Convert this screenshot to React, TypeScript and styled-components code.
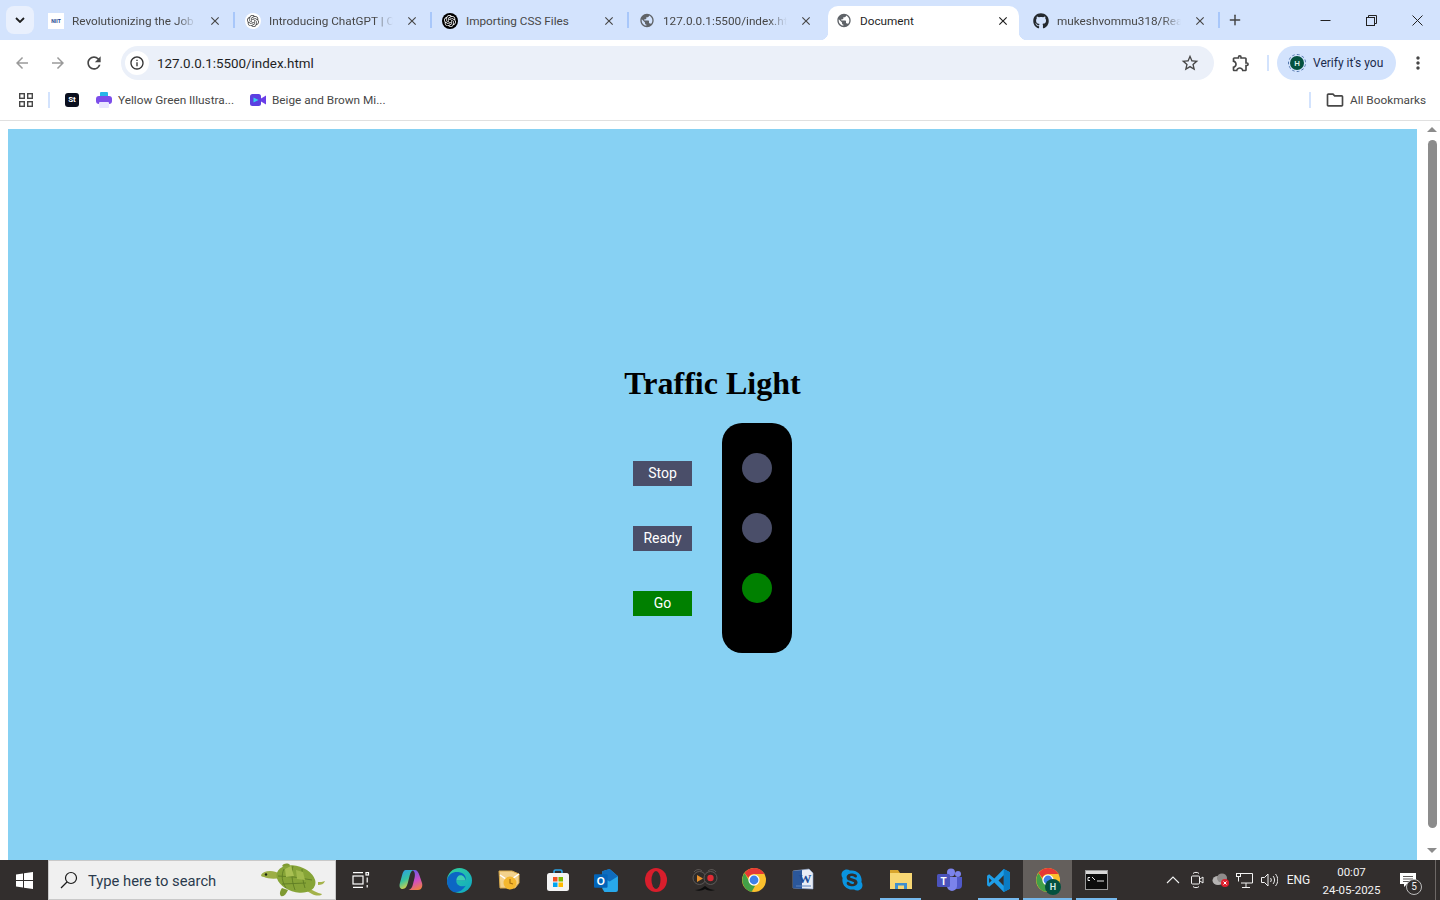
import styled, { createGlobalStyle } from "styled-components";
import { ReactNode } from "react";
import {
  MdArrowBack,
  MdArrowForward,
  MdClose,
  MdInfoOutline,
  MdMoreVert,
  MdOutlineExtension,
  MdOutlineFolder,
  MdPublic,
  MdRefresh,
  MdStarBorder,
} from "react-icons/md";
import { FaGithub, FaSkype } from "react-icons/fa";
import { SiOpenai } from "react-icons/si";
import { FiPlus } from "react-icons/fi";

const GlobalStyle = createGlobalStyle`
  html, body {
    margin: 0;
    padding: 0;
    height: 100%;
    overflow: hidden;
    background: #fff;
  }
  * { box-sizing: border-box; }
`;

const uiFont = `Roboto, "Noto Sans", sans-serif`;

const Screen = styled.div`
  width: 1440px;
  height: 900px;
  display: flex;
  flex-direction: column;
  font-family: ${uiFont};
`;

/* ---- tab strip ---- */
const TabStrip = styled.div`
  height: 40px;
  flex: none;
  background: #d3e3fd;
  display: flex;
  align-items: flex-end;
  position: relative;
`;

const TabSearch = styled.div`
  width: 28px;
  height: 28px;
  margin: 0 6px 6px 6px;
  border-radius: 8px;
  background: #e9f0fd;
  display: flex;
  align-items: center;
  justify-content: center;
  flex: none;
`;

const TabRow = styled.div`
  display: flex;
  gap: 6px;
  height: 34px;
`;

const Tab = styled.div<{ $active?: boolean; $sep?: boolean }>`
  width: 191px;
  height: 34px;
  position: relative;
  display: flex;
  align-items: center;
  padding: 0 0 5px 8px;
  border-radius: 10px 10px 0 0;
  background: ${(p) => (p.$active ? "#fff" : "transparent")};
  color: ${(p) => (p.$active ? "#1f1f1f" : "#474747")};
  ${(p) =>
    p.$sep
      ? `&::after {
    content: "";
    position: absolute;
    right: -4px;
    top: 6px;
    width: 2px;
    height: 16px;
    background: #a8c7fa;
  }`
      : ""}
  ${(p) =>
    p.$active
      ? `&::before {
    content: "";
    position: absolute;
    left: -8px;
    bottom: 0;
    width: 8px;
    height: 8px;
    background: radial-gradient(circle at 0 0, #d3e3fd 8px, #fff 8.5px);
  }`
      : ""}
`;

const ActiveTabTail = styled.span`
  position: absolute;
  right: -8px;
  bottom: 0;
  width: 8px;
  height: 8px;
  background: radial-gradient(circle at 100% 0, #d3e3fd 8px, #fff 8.5px);
`;

const Favicon = styled.span`
  width: 16px;
  height: 16px;
  flex: none;
  display: flex;
  align-items: center;
  justify-content: center;
`;

const TabTitle = styled.span<{ $fade?: boolean }>`
  margin-left: 8px;
  width: 124px;
  flex: none;
  font-size: 11.75px;
  line-height: 16px;
  white-space: nowrap;
  overflow: hidden;
  ${(p) =>
    p.$fade
      ? `mask-image: linear-gradient(to right, #000 85%, transparent 100%);`
      : ""}
`;

const TabClose = styled.span`
  margin-left: 11px;
  width: 16px;
  height: 16px;
  flex: none;
  display: flex;
  align-items: center;
  justify-content: center;
`;

const NewTab = styled.div`
  width: 20px;
  height: 20px;
  margin: 0 0 10px 9px;
  color: #444;
  display: flex;
  align-items: center;
  justify-content: center;
`;

const WindowControls = styled.div`
  margin-left: auto;
  display: flex;
  height: 40px;
  align-items: center;
`;

const WindowButton = styled.div`
  width: 46px;
  height: 40px;
  display: flex;
  align-items: center;
  justify-content: center;
`;

/* ---- toolbar ---- */
const Toolbar = styled.div`
  height: 40px;
  flex: none;
  background: #fff;
  display: flex;
  align-items: flex-end;
  padding-left: 4px;
  border-radius: 8px 8px 0 0;
  margin-top: 0;
`;

const NavButton = styled.div<{ $muted?: boolean; $w?: number }>`
  width: ${(p) => p.$w ?? 36}px;
  height: 34px;
  flex: none;
  display: flex;
  align-items: center;
  justify-content: center;
  color: ${(p) => (p.$muted ? "#9a9a9a" : "#474747")};
`;

const Omnibox = styled.div`
  width: 1093px;
  height: 34px;
  margin-left: 9px;
  flex: none;
  background: #ebf0f9;
  border-radius: 17px;
  display: flex;
  align-items: center;
  padding: 0 14px 0 4px;
`;

const InfoBadge = styled.div`
  width: 24px;
  height: 24px;
  border-radius: 50%;
  background: #fff;
  color: #333;
  display: flex;
  align-items: center;
  justify-content: center;
  flex: none;
`;

const UrlText = styled.span`
  margin-left: 8px;
  font-size: 13.4px;
  color: #1f1f1f;
`;

const OmniStar = styled.div`
  margin-left: auto;
  color: #474747;
  display: flex;
`;

const ToolDivider = styled.div`
  width: 2px;
  height: 16px;
  margin: 0 8px 9px 0;
  background: #d3e3fd;
  flex: none;
`;

const ProfilePill = styled.div`
  width: 119px;
  height: 34px;
  flex: none;
  border-radius: 17px;
  background: #d3e3fd;
  display: flex;
  align-items: center;
  padding-left: 11px;
`;

const Avatar = styled.div<{ $size: number }>`
  width: ${(p) => p.$size}px;
  height: ${(p) => p.$size}px;
  border-radius: 50%;
  background: #04513f;
  color: #d7efe6;
  font-size: ${(p) => Math.round(p.$size * 0.55)}px;
  font-weight: 600;
  display: flex;
  align-items: center;
  justify-content: center;
  flex: none;
`;

const AvatarRing = styled.div`
  width: 18px;
  height: 18px;
  border: 1px dashed #4a6fa8;
  border-radius: 50%;
  display: flex;
  align-items: center;
  justify-content: center;
  flex: none;
`;

const ProfileText = styled.span`
  margin-left: 7px;
  font-size: 12px;
  color: #1b2b4d;
  white-space: nowrap;
`;

/* ---- bookmarks ---- */
const BookmarksBar = styled.div`
  height: 41px;
  flex: none;
  background: #fff;
  border-bottom: 1px solid #e0e0e0;
  padding-bottom: 1px;
  display: flex;
  align-items: center;
`;

const BarSlot = styled.div<{ $w: number; $pl?: number; $pr?: number }>`
  width: ${(p) => p.$w}px;
  height: 24px;
  flex: none;
  padding: 0 ${(p) => p.$pr ?? 0}px 0 ${(p) => p.$pl ?? 0}px;
  display: flex;
  align-items: center;
  justify-content: center;
`;

const BarDivider = styled.div`
  width: 2px;
  height: 16px;
  background: #d3e3fd;
  flex: none;
`;

const Bookmark = styled.div<{ $w: number }>`
  width: ${(p) => p.$w}px;
  flex: none;
  display: flex;
  align-items: center;
  gap: 6px;
  font-size: 11.8px;
  color: #474747;
  white-space: nowrap;
`;

const StBadge = styled.span`
  width: 14px;
  height: 14px;
  border-radius: 3px;
  background: #0a0f1e;
  color: #fff;
  font-size: 8px;
  font-weight: 700;
  display: flex;
  align-items: center;
  justify-content: center;
`;

/* ---- page ---- */
const Viewport = styled.div`
  flex: 1;
  display: flex;
  min-height: 0;
`;

const PageArea = styled.div`
  flex: 1;
  padding: 8px 0 0 8px;
  background: #fff;
  min-width: 0;
`;

const Page = styled.main`
  height: 100%;
  background: #87d1f3;
  display: flex;
  flex-direction: column;
  align-items: center;
  padding-top: 236px;
`;

const Title = styled.h1`
  margin: 0 0 21px;
  font-family: "Liberation Serif", "Times New Roman", serif;
  font-size: 32px;
  font-weight: 700;
  line-height: 37px;
  color: #000;
`;

const LightRow = styled.div`
  display: flex;
  align-items: center;
  gap: 30px;
`;

const Controls = styled.div`
  display: flex;
  flex-direction: column;
  gap: 40px;
`;

const ControlButton = styled.button<{ $on?: boolean }>`
  width: 59px;
  height: 25px;
  padding: 0;
  border: none;
  background: ${(p) => (p.$on ? "#008000" : "#4a4e69")};
  color: #fff;
  font-family: Roboto, "Liberation Sans", sans-serif;
  font-size: 14px;
  font-weight: 400;
`;

const Housing = styled.div`
  width: 70px;
  height: 230px;
  background: #000;
  border-radius: 20px;
  display: flex;
  flex-direction: column;
  align-items: center;
  gap: 30px;
  padding-top: 30px;
`;

const Lamp = styled.div<{ $on?: boolean }>`
  width: 30px;
  height: 30px;
  border-radius: 50%;
  background: ${(p) => (p.$on ? "#008000" : "#4a4e69")};
`;

/* ---- scrollbar ---- */
const ScrollBar = styled.div`
  width: 23px;
  flex: none;
  background: #fff;
  display: flex;
  flex-direction: column;
  align-items: center;
  padding: 6px 0 7px 7px;
`;

const ScrollThumb = styled.div`
  width: 9px;
  flex: 1;
  margin: 8px 0 20px;
  border-radius: 5px;
  background: #8c8c8c;
`;

const ScrollArrow = styled.div<{ $down?: boolean }>`
  width: 0;
  height: 0;
  border-left: 5px solid transparent;
  border-right: 5px solid transparent;
  ${(p) =>
    p.$down
      ? "border-top: 5px solid #8c8c8c;"
      : "border-bottom: 5px solid #8c8c8c;"}
`;

/* ---- taskbar ---- */
const Taskbar = styled.div`
  height: 40px;
  flex: none;
  background: #322e2d;
  display: flex;
  align-items: stretch;
  color: #f2f2f2;
`;

const StartButton = styled.div`
  width: 48px;
  flex: none;
  display: flex;
  align-items: center;
  justify-content: center;
`;

const SearchBox = styled.div`
  width: 288px;
  flex: none;
  background: #f0f0f0;
  border: 1px solid #c9c9c9;
  display: flex;
  align-items: center;
  padding-left: 11px;
  color: #2a3a4d;
  font-size: 14.75px;
`;

const SearchLabel = styled.span`
  margin-left: 10px;
  padding-top: 1px;
  white-space: nowrap;
`;

const Turtle = styled.svg`
  margin-left: auto;
  margin-right: 9px;
  flex: none;
`;

const AppSlot = styled.div<{ $w?: number; $open?: boolean; $active?: boolean }>`
  width: ${(p) => p.$w ?? 49}px;
  flex: none;
  position: relative;
  display: flex;
  align-items: center;
  justify-content: center;
  background: ${(p) => (p.$active ? "#645f5c" : "transparent")};
  ${(p) =>
    p.$open
      ? `&::after {
    content: "";
    position: absolute;
    bottom: 0;
    left: ${p.$active ? 0 : 4}px;
    right: ${p.$active ? 0 : 4}px;
    height: 2px;
    background: #76b9ed;
  }`
      : ""}
`;

const Tray = styled.div`
  margin-left: auto;
  display: flex;
  align-items: stretch;
`;

const TraySlot = styled.div<{ $w: number }>`
  width: ${(p) => p.$w}px;
  flex: none;
  display: flex;
  align-items: center;
  justify-content: center;
  font-size: 12px;
  position: relative;
`;

const Clock = styled.div`
  width: 73px;
  flex: none;
  display: flex;
  flex-direction: column;
  align-items: center;
  justify-content: center;
  font-size: 11.5px;
  line-height: 18px;
  padding-top: 1px;
`;

const NoticeCount = styled.span`
  position: absolute;
  right: 6px;
  bottom: 5px;
  width: 16px;
  height: 16px;
  border: 1px solid #bdbdbd;
  border-radius: 50%;
  background: #322e2d;
  font-size: 10px;
  line-height: 14px;
  text-align: center;
`;

const ShowDesktop = styled.div`
  width: 12px;
  flex: none;
  display: flex;
  justify-content: center;
  &::before {
    content: "";
    width: 1px;
    background: #6d6866;
    margin-left: 2px;
  }
`;

const AvatarBadge = styled.div`
  position: absolute;
  right: 11px;
  bottom: 5px;
`;

/* ---- drawn icons ---- */
const ChromeLogo = ({ size }: { size: number }) => (
  <svg width={size} height={size} viewBox="0 0 24 24">
    <circle cx="12" cy="12" r="12" fill="#fbc02d" />
    <path d="M12 0a12 12 0 0 1 10.4 6H12a6 6 0 0 0-5.6 3.9L2.6 5A12 12 0 0 1 12 0z" fill="#e53935" />
    <path d="M2.6 5l4.8 8.6A6 6 0 0 0 13 18l-3.3 5.8A12 12 0 0 1 2.6 5z" fill="#43a047" />
    <circle cx="12" cy="12" r="5.6" fill="#fff" />
    <circle cx="12" cy="12" r="4.4" fill="#3f80e8" />
  </svg>
);

const WinLogo = () => (
  <svg width="17" height="17" viewBox="0 0 17 17" fill="#fff">
    <path d="M0 2.4 7 1.4V8H0zM8 1.3 17 0v8H8zM0 9h7v6.6l-7-1zM8 9h9v8l-9-1.3z" />
  </svg>
);

const TaskViewIcon = () => (
  <svg width="18" height="16" viewBox="0 0 18 16" fill="none" stroke="#fff" strokeWidth="1.2">
    <path d="M1 .6h10M1 15.4h10" />
    <rect x="1" y="4" width="10" height="8" />
    <rect x="14" y=".5" width="2.5" height="2.5" />
    <path d="M15.2 5.5v5M15.2 13v2.5" />
  </svg>
);

const CopilotIcon = () => (
  <svg width="24" height="24" viewBox="0 0 24 24">
    <defs>
      <linearGradient id="cpA" x1="0.2" y1="0" x2="0.6" y2="1">
        <stop offset="0" stopColor="#2b9fe6" />
        <stop offset="0.5" stopColor="#37c3a0" />
        <stop offset="1" stopColor="#f3d13a" />
      </linearGradient>
      <linearGradient id="cpB" x1="0.4" y1="0" x2="0.7" y2="1">
        <stop offset="0" stopColor="#6a5be8" />
        <stop offset="0.55" stopColor="#d24fc0" />
        <stop offset="1" stopColor="#f0823c" />
      </linearGradient>
    </defs>
    <path d="M7 2h7.500c-2 .6-3 2.500-3.700 5l-2 8c-.8 3-2.300 6-5.300 6C1 21 0 18.500 .8 15.500L3 7.500C3.800 4 5 2 7 2z" fill="url(#cpA)" />
    <path d="M13 2h2.500C18 2 19.500 4 20.500 7.500L23 15c1 3.500-.5 7-4 7H9.500c2.500-.5 3.800-3 4.500-6l1.500-6c.8-3.500.5-7-2.500-8z" fill="url(#cpB)" />
  </svg>
);

const EdgeIcon = () => (
  <svg width="25" height="25" viewBox="0 0 24 24">
    <defs>
      <linearGradient id="edA" x1="0" y1="0" x2="1" y2="1">
        <stop offset="0" stopColor="#34d399" />
        <stop offset="1" stopColor="#0ea5c6" />
      </linearGradient>
    </defs>
    <circle cx="12" cy="12" r="12" fill="url(#edA)" />
    <path d="M0 12C1 5 7 3 12 4c5 1 7 5 5.500 8H9c-.5 4 4 7 9 5 -3 5-8 7-12 6C2 21 0 17 0 12z" fill="#0c66c4" />
    <path d="M9 12c0-3 2-5 4-5 3 0 4.500 2.500 4.500 5H9z" fill="#3fd0b0" />
  </svg>
);

const OutlookOldIcon = () => (
  <svg width="24" height="24" viewBox="0 0 24 24">
    <path d="M2 3h13l7 3v9l-4 5H3z" fill="#f3d28c" stroke="#d8a94a" />
    <path d="M3 7l9 6 10-7" fill="none" stroke="#fff" strokeWidth="1.5" />
    <circle cx="13" cy="15" r="6.500" fill="#f5b82e" />
    <path d="M13 11v4l3 1" fill="none" stroke="#a86f10" strokeWidth="1.200" />
  </svg>
);

const StoreIcon = () => (
  <svg width="24" height="24" viewBox="0 0 24 24">
    <path d="M8 6V3.500A1.500 1.500 0 0 1 9.500 2h5A1.500 1.500 0 0 1 16 3.500V6" fill="none" stroke="#2aa4e6" strokeWidth="1.600" />
    <rect x="1" y="5" width="22" height="18" rx="2.500" fill="#f4f4f4" />
    <rect x="7" y="9" width="4.500" height="4.500" fill="#f25022" />
    <rect x="12.500" y="9" width="4.500" height="4.500" fill="#7fba00" />
    <rect x="7" y="14.500" width="4.500" height="4.500" fill="#00a4ef" />
    <rect x="12.500" y="14.500" width="4.500" height="4.500" fill="#ffb900" />
  </svg>
);

const OutlookIcon = () => (
  <svg width="25" height="25" viewBox="0 0 24 24">
    <path d="M8 3l7-2 8 7v13a2 2 0 0 1-2 2H10l-2-3z" fill="#28a8ea" />
    <path d="M8 3l7-2 8 7-8 5-7-4z" fill="#0f6cbd" />
    <rect x="0" y="6" width="13" height="13" rx="1" fill="#0364b8" />
    <text x="6.500" y="16.500" textAnchor="middle" fontSize="10" fontWeight="700" fill="#fff" fontFamily="Liberation Sans, sans-serif">O</text>
  </svg>
);

const OperaIcon = () => (
  <svg width="24" height="24" viewBox="0 0 24 24">
    <ellipse cx="12" cy="12" rx="11" ry="12" fill="#d81e2c" />
    <ellipse cx="12" cy="12" rx="4.500" ry="9" fill="#322e2d" />
  </svg>
);

const OwlIcon = () => (
  <svg width="26" height="24" viewBox="0 0 26 24">
    <circle cx="7.500" cy="10" r="6.500" fill="#2e2b2a" stroke="#5d5957" strokeWidth="1" />
    <circle cx="18.500" cy="10" r="6.500" fill="#2e2b2a" stroke="#5d5957" strokeWidth="1" />
    <path d="M5 7l6 3.500-6 3.500z" fill="#e8902a" />
    <circle cx="18.500" cy="10" r="3.200" fill="#e02b35" />
    <path d="M3 22c3 0 6-1 10-4 4 3 7 4 10 4-3 1-7 1-10-1-3 2-7 2-10 1z" fill="#0d0d0d" />
    <path d="M2 4C4 1 8 1 10 3M24 4c-2-3-6-3-8-1" fill="none" stroke="#5d5957" />
  </svg>
);

const WordIcon = () => (
  <svg width="24" height="24" viewBox="0 0 24 24">
    <path d="M2 3l16-2 4 4v16l-20-1z" fill="#e9edf6" stroke="#8da6cf" strokeWidth="0.6" />
    <path d="M2 3l9-1v19l-9-1z" fill="#2b579a" />
    <text x="14" y="15" textAnchor="middle" fontSize="13" fontWeight="700" fill="#1e4c96" fontFamily="Liberation Serif, serif">W</text>
    <path d="M5 18h15" stroke="#5b82bf" />
  </svg>
);

const FolderIcon = () => (
  <svg width="24" height="22" viewBox="0 0 24 22">
    <path d="M1 1h8l2 3h12v6H1z" fill="#d9a62e" />
    <rect x="1" y="4" width="22" height="16" fill="#f7d774" />
    <rect x="6" y="14" width="12" height="6" fill="#3f8fcf" />
    <rect x="9" y="16.500" width="6" height="3.500" fill="#f7d774" />
  </svg>
);

const TeamsIcon = () => (
  <svg width="26" height="24" viewBox="0 0 26 24">
    <circle cx="21" cy="6" r="3" fill="#7b83eb" />
    <circle cx="14" cy="4.500" r="4" fill="#7b83eb" />
    <path d="M15 9h10v8a4 4 0 0 1-4 4h-2z" fill="#5059c9" />
    <path d="M8 9h12v9a5 5 0 0 1-10 0z" fill="#7b83eb" />
    <rect x="0" y="6" width="13" height="13" rx="1.500" fill="#4b53bc" />
    <text x="6.500" y="16.500" textAnchor="middle" fontSize="10" fontWeight="700" fill="#fff" fontFamily="Liberation Sans, sans-serif">T</text>
  </svg>
);

const VsCodeIcon = () => (
  <svg width="25" height="25" viewBox="0 0 24 24">
    <path d="M17 1l6 3v16l-6 3L8 14l-5 4-2-1.500V7.500L3 6l5 4z" fill="#1f9ee8" />
    <path d="M17 1l6 3v16l-6 3z" fill="#0a7cc4" />
    <path d="M17 7l-5 5 5 5z" fill="#322e2d" />
    <path d="M3 9.500v5L5.500 12z" fill="#322e2d" />
  </svg>
);

const CmdIcon = () => (
  <svg width="23" height="20" viewBox="0 0 23 20">
    <rect x="0.500" y="0.500" width="22" height="19" fill="#0c0c0c" stroke="#9a9a9a" />
    <rect x="1" y="1" width="21" height="3" fill="#d8d8d8" />
    <path d="M3 7.500h2M3 7.500v3h2M7 7l3 3M12 11h7" stroke="#e8e8e8" strokeWidth="1" fill="none" />
  </svg>
);

const appIcons: { id: string; icon: ReactNode; open?: boolean }[] = [
  { id: "copilot", icon: <CopilotIcon /> },
  { id: "edge", icon: <EdgeIcon /> },
  { id: "outlook-old", icon: <OutlookOldIcon /> },
  { id: "store", icon: <StoreIcon /> },
  { id: "outlook", icon: <OutlookIcon /> },
  { id: "opera", icon: <OperaIcon /> },
  { id: "owl", icon: <OwlIcon /> },
  { id: "chrome", icon: <ChromeLogo size={24} /> },
  { id: "word", icon: <WordIcon /> },
  { id: "skype", icon: <FaSkype size={24} color="#0a94e0" /> },
  { id: "explorer", icon: <FolderIcon />, open: true },
  { id: "teams", icon: <TeamsIcon /> },
  { id: "vscode", icon: <VsCodeIcon />, open: true },
];

const WhiteDisc = styled.span`
  width: 16px;
  height: 16px;
  border-radius: 50%;
  background: #fff;
  display: flex;
  align-items: center;
  justify-content: center;
`;

const BlackDisc = styled(WhiteDisc)`
  background: #000;
`;

const SiteBadge = styled.span`
  width: 16px;
  height: 16px;
  background: #fff;
  color: #1b3f8f;
  font-size: 5px;
  font-weight: 700;
  line-height: 6px;
  text-align: center;
  display: flex;
  align-items: center;
  justify-content: center;
`;

const tabs: { id: string; title: string; icon: ReactNode; sep?: boolean; active?: boolean }[] = [
  { id: "a", title: "Revolutionizing the Job Market", icon: <SiteBadge>NIIT</SiteBadge>, sep: true },
  {
    id: "b",
    title: "Introducing ChatGPT | OpenAI",
    icon: (
      <WhiteDisc>
        <SiOpenai size={12} color="#444" />
      </WhiteDisc>
    ),
    sep: true,
  },
  {
    id: "c",
    title: "Importing CSS Files",
    icon: (
      <BlackDisc>
        <SiOpenai size={12} color="#fff" />
      </BlackDisc>
    ),
    sep: true,
  },
  { id: "d", title: "127.0.0.1:5500/index.html", icon: <MdPublic size={17} color="#5f6368" /> },
  { id: "e", title: "Document", icon: <MdPublic size={17} color="#5f6368" />, active: true },
  { id: "f", title: "mukeshvommu318/React-Projects", icon: <FaGithub size={16} color="#24292e" />, sep: true },
];

function App() {
  return (
    <Screen>
      <GlobalStyle />
      <TabStrip>
        <TabSearch>
          <svg width="10" height="6" viewBox="0 0 10 6" fill="none" stroke="#1f1f1f" strokeWidth="1.800">
            <path d="M1 1l4 4 4-4" />
          </svg>
        </TabSearch>
        <TabRow>
          {tabs.map((t) => (
            <Tab key={t.id} $active={t.active} $sep={t.sep}>
              <Favicon>{t.icon}</Favicon>
              <TabTitle $fade={!t.active && t.id !== "c"}>{t.title}</TabTitle>
              <TabClose>
                <MdClose size={14} color={t.active ? "#1f1f1f" : "#474747"} />
              </TabClose>
              {t.active && <ActiveTabTail />}
            </Tab>
          ))}
        </TabRow>
        <NewTab>
          <FiPlus size={16} strokeWidth={2.200} />
        </NewTab>
        <WindowControls>
          <WindowButton>
            <svg width="11" height="11" viewBox="0 0 11 11" stroke="#222" fill="none">
              <path d="M0.500 5.500h10" />
            </svg>
          </WindowButton>
          <WindowButton>
            <svg width="11" height="11" viewBox="0 0 11 11" stroke="#222" fill="none">
              <rect x="0.500" y="2.500" width="8" height="8" />
              <path d="M2.500 2.500v-2h8v8h-2" />
            </svg>
          </WindowButton>
          <WindowButton>
            <svg width="11" height="11" viewBox="0 0 11 11" stroke="#222" fill="none">
              <path d="M0.500 0.500l10 10M10.500 0.500l-10 10" />
            </svg>
          </WindowButton>
        </WindowControls>
      </TabStrip>

      <Toolbar>
        <NavButton $muted>
          <MdArrowBack size={18} />
        </NavButton>
        <NavButton $muted>
          <MdArrowForward size={18} />
        </NavButton>
        <NavButton>
          <MdRefresh size={20} />
        </NavButton>
        <Omnibox>
          <InfoBadge>
            <MdInfoOutline size={16} />
          </InfoBadge>
          <UrlText>127.0.0.1:5500/index.html</UrlText>
          <OmniStar>
            <MdStarBorder size={20} />
          </OmniStar>
        </Omnibox>
        <NavButton $w={53}>
          <MdOutlineExtension size={20} />
        </NavButton>
        <ToolDivider />
        <ProfilePill>
          <AvatarRing>
            <Avatar $size={14}>H</Avatar>
          </AvatarRing>
          <ProfileText>Verify it's you</ProfileText>
        </ProfilePill>
        <NavButton $w={44}>
          <MdMoreVert size={20} />
        </NavButton>
      </Toolbar>

      <BookmarksBar>
        <BarSlot $w={48} $pl={4}>
          <svg width="14" height="14" viewBox="0 0 14 14" fill="none" stroke="#474747" strokeWidth="1.400">
            <rect x="0.700" y="0.700" width="4.600" height="4.600" />
            <rect x="8.700" y="0.700" width="4.600" height="4.600" />
            <rect x="0.700" y="8.700" width="4.600" height="4.600" />
            <rect x="8.700" y="8.700" width="4.600" height="4.600" />
          </svg>
        </BarSlot>
        <BarDivider />
        <BarSlot $w={46} $pr={2}>
          <StBadge>St</StBadge>
        </BarSlot>
        <Bookmark $w={154}>
          <svg width="16" height="16" viewBox="0 0 16 16">
            <rect x="4" y="0" width="8" height="6" rx="1" fill="#26b6e8" />
            <rect x="0" y="4" width="16" height="8" rx="3" fill="#7c4dea" />
            <rect x="3" y="10" width="10" height="6" rx="1" fill="#e9e6ff" />
          </svg>
          <span>Yellow Green Illustra...</span>
        </Bookmark>
        <Bookmark $w={1059}>
          <svg width="16" height="16" viewBox="0 0 16 16">
            <rect x="0" y="2" width="11" height="12" rx="2.500" fill="#5b3fe0" />
            <path d="M11 6.500l5-3v9l-5-3z" fill="#6a3de8" />
            <path d="M3.500 5.500l5 2.500-5 2.500z" fill="#39d0f0" />
          </svg>
          <span>Beige and Brown Mi...</span>
        </Bookmark>
        <BarDivider />
        <BarSlot $w={39} $pl={8}>
          <MdOutlineFolder size={20} color="#474747" />
        </BarSlot>
        <Bookmark $w={80}>All Bookmarks</Bookmark>
      </BookmarksBar>

      <Viewport>
        <PageArea>
          <Page>
            <Title>Traffic Light</Title>
            <LightRow>
              <Controls>
                <ControlButton>Stop</ControlButton>
                <ControlButton>Ready</ControlButton>
                <ControlButton $on>Go</ControlButton>
              </Controls>
              <Housing>
                <Lamp />
                <Lamp />
                <Lamp $on />
              </Housing>
            </LightRow>
          </Page>
        </PageArea>
        <ScrollBar>
          <ScrollArrow />
          <ScrollThumb />
          <ScrollArrow $down />
        </ScrollBar>
      </Viewport>

      <Taskbar>
        <StartButton>
          <WinLogo />
        </StartButton>
        <SearchBox>
          <svg width="18" height="18" viewBox="0 0 18 18" fill="none" stroke="#1a1a1a" strokeWidth="1.200">
            <circle cx="11" cy="7" r="5.500" />
            <path d="M7 11l-6 6" />
          </svg>
          <SearchLabel>Type here to search</SearchLabel>
          <Turtle width="66" height="36" viewBox="0 0 66 36">
            <path d="M48 26c5 2 9 5 14 6-1 2-6 2-10 0l-7-4z" fill="#a4b24a" />
            <path d="M22 26c-2 3-3 6-1 8 3 1 5-2 7-6z" fill="#7f9a32" />
            <path d="M22 4c2-3 6-3 8-1l-2 5z" fill="#7f9a32" />
            <path d="M58 20c2 0 5 0 7-1-1 3-4 4-7 4z" fill="#a4b24a" />
            <path d="M1 13c2-4 9-5 15-3 3 1 5 4 5 6-6 1-13 1-17-1-2 0-3-1-3-2z" fill="#9cae46" />
            <circle cx="6" cy="12.500" r="1.200" fill="#1e2410" />
            <ellipse cx="36" cy="17" rx="20" ry="13" fill="#86a437" transform="rotate(18 36 17)" />
            <path d="M24 7c-3 6-2 13 2 19M33 4c-2 7-1 16 2 24M42 7c0 6 1 13 3 19M18 14l16 1 18 3M22 22l24-1" fill="none" stroke="#5f7d24" strokeWidth="0.900" />
            <path d="M25 7l6-3 3 10-8 1z" fill="#a9c052" />
            <path d="M36 8l7 2 2 8-8-1z" fill="#a1ba4c" />
          </Turtle>
        </SearchBox>
        <AppSlot $w={50}>
          <TaskViewIcon />
        </AppSlot>
        {appIcons.map((a) => (
          <AppSlot key={a.id} $open={a.open}>
            {a.icon}
          </AppSlot>
        ))}
        <AppSlot $open $active>
          <ChromeLogo size={24} />
          <AvatarBadge>
            <Avatar $size={16}>H</Avatar>
          </AvatarBadge>
        </AppSlot>
        <AppSlot $open>
          <CmdIcon />
        </AppSlot>
        <Tray>
          <TraySlot $w={24}>
            <svg width="14" height="8" viewBox="0 0 14 8" fill="none" stroke="#f2f2f2" strokeWidth="1.100">
              <path d="M1 7l6-6 6 6" />
            </svg>
          </TraySlot>
          <TraySlot $w={24}>
            <svg width="13" height="18" viewBox="0 0 13 18" fill="none" stroke="#f2f2f2" strokeWidth="1">
              <path d="M2 2.500C3 1 7 1 8 2.500M2 15.500c1 1.500 5 1.500 6 0" />
              <rect x="0.500" y="5" width="8" height="8" rx="1" />
              <path d="M9 8l3-2v6l-3-2" />
            </svg>
          </TraySlot>
          <TraySlot $w={23}>
            <svg width="18" height="14" viewBox="0 0 18 14">
              <ellipse cx="6" cy="7.500" rx="5.500" ry="4.500" fill="#b5b3b2" />
              <ellipse cx="10" cy="5" rx="5" ry="4.500" fill="#8f8c8b" />
              <circle cx="13" cy="10" r="4" fill="#e0202e" />
              <path d="M11.500 8.500l3 3M14.500 8.500l-3 3" stroke="#fff" strokeWidth="1" />
            </svg>
          </TraySlot>
          <TraySlot $w={24}>
            <svg width="17" height="15" viewBox="0 0 17 15" fill="none" stroke="#f2f2f2" strokeWidth="1">
              <path d="M4 .5h12.500v9.500H5M10 10v4M6 14.500h8" />
              <rect x="0.500" y="0.500" width="4" height="3" />
              <path d="M2.500 3.500v5" />
            </svg>
          </TraySlot>
          <TraySlot $w={26}>
            <svg width="17" height="14" viewBox="0 0 17 14" fill="none" stroke="#f2f2f2" strokeWidth="1">
              <path d="M.5 4.500h3L7 1v12L3.500 9.500h-3z" />
              <path d="M9.500 5c1 1.200 1 2.800 0 4M12 3c2 2.400 2 5.600 0 8M14.500 1c3 3.600 3 8.400 0 12" />
            </svg>
          </TraySlot>
          <TraySlot $w={33}>ENG</TraySlot>
          <Clock>
            <span>00:07</span>
            <span>24-05-2025</span>
          </Clock>
          <TraySlot $w={40}>
            <svg width="17" height="15" viewBox="0 0 17 15">
              <path d="M0 0h16v11H7l-3 3v-3H0z" fill="#fff" />
              <path d="M3 3.500h10M3 6h10M3 8.500h7" stroke="#322e2d" strokeWidth="0.800" />
            </svg>
            <NoticeCount>5</NoticeCount>
          </TraySlot>
          <ShowDesktop />
        </Tray>
      </Taskbar>
    </Screen>
  );
}

export default App;
